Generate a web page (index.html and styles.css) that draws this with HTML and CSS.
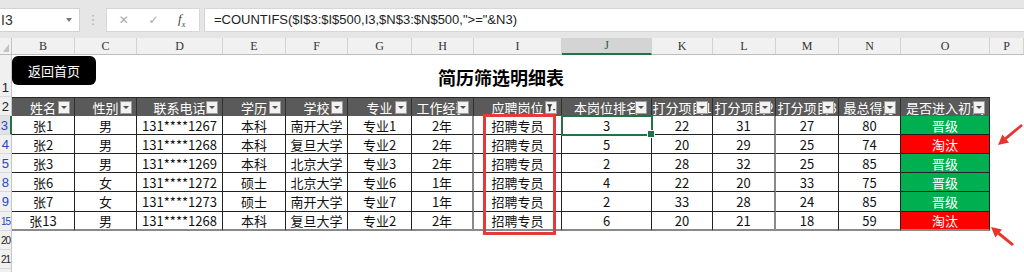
FILE: index.html
```html
<!DOCTYPE html>
<html lang="zh-CN">
<head>
<meta charset="utf-8">
<title>简历筛选明细表</title>
<link rel="stylesheet" href="styles.css">
</head>
<body>
<div class="app">
  <div class="fbar">
    <div class="namebox"><span class="nb-text">I3</span><span class="nb-arrow"></span></div>
    <div class="dots">⋮</div>
    <div class="fxbox"><span class="ic">✕</span><span class="ic">✓</span><span class="ic fx">f<sub>x</sub></span></div>
    <div class="formula">=COUNTIFS($I$3:$I$500,I3,$N$3:$N$500,"&gt;="&amp;N3)</div>
  </div>

  <div class="sheet">
    <div class="row colhdr">
      <div class="corner"></div>
      <div>B</div><div>C</div><div>D</div><div>E</div><div>F</div><div>G</div><div>H</div><div>I</div>
      <div class="csel">J</div><div>K</div><div>L</div><div>M</div><div>N</div><div>O</div><div>P</div>
    </div>

    <div class="row r1">
      <div class="rh bottom">1</div>
      <div class="title">简历筛选明细表</div>
      <div></div>
    </div>

    <div class="row r2">
      <div class="rh">2</div>
      <div class="th">姓名<span class="dd"></span></div>
      <div class="th">性别<span class="dd"></span></div>
      <div class="th">联系电话<span class="dd"></span></div>
      <div class="th">学历<span class="dd"></span></div>
      <div class="th">学校<span class="dd"></span></div>
      <div class="th">专业<span class="dd"></span></div>
      <div class="th">工作经验<span class="dd"></span></div>
      <div class="th">应聘岗位<span class="dd filt"><svg viewBox="0 0 11 12" width="11" height="12"><path d="M1 2h6L5 5v4L3 10V5z" fill="#333"/><path d="M7.5 7h3l-1.5 2z" fill="#333"/></svg></span></div>
      <div class="th">本岗位排名<span class="dd"></span></div>
      <div class="th">打分项目1<span class="dd"></span></div>
      <div class="th">打分项目2<span class="dd"></span></div>
      <div class="th">打分项目3<span class="dd"></span></div>
      <div class="th">最总得分<span class="dd"></span></div>
      <div class="th">是否进入初试<span class="dd"></span></div>
      <div class="blank"></div>
    </div>

    <div class="row rd">
      <div class="rh f sel">3</div>
      <div class="td">张1</div><div class="td">男</div><div class="td">131****1267</div><div class="td">本科</div><div class="td">南开大学</div><div class="td">专业1</div><div class="td gr">2年</div><div class="td">招聘专员</div><div class="td">3</div><div class="td">22</div><div class="td gr">31</div><div class="td">27</div><div class="td">80</div><div class="td ok">晋级</div><div class="blank"></div>
    </div>
    <div class="row rd">
      <div class="rh f">4</div>
      <div class="td">张2</div><div class="td">男</div><div class="td">131****1268</div><div class="td">本科</div><div class="td">复旦大学</div><div class="td">专业2</div><div class="td gr">2年</div><div class="td">招聘专员</div><div class="td">5</div><div class="td">20</div><div class="td gr">29</div><div class="td">25</div><div class="td">74</div><div class="td no">淘汰</div><div class="blank"></div>
    </div>
    <div class="row rd">
      <div class="rh f">5</div>
      <div class="td">张3</div><div class="td">男</div><div class="td">131****1269</div><div class="td">本科</div><div class="td">北京大学</div><div class="td">专业3</div><div class="td gr">2年</div><div class="td">招聘专员</div><div class="td">2</div><div class="td">28</div><div class="td gr">32</div><div class="td">25</div><div class="td">85</div><div class="td ok">晋级</div><div class="blank"></div>
    </div>
    <div class="row rd">
      <div class="rh f">8</div>
      <div class="td">张6</div><div class="td">女</div><div class="td">131****1272</div><div class="td">硕士</div><div class="td">北京大学</div><div class="td">专业6</div><div class="td gr">1年</div><div class="td">招聘专员</div><div class="td">4</div><div class="td">22</div><div class="td gr">20</div><div class="td">33</div><div class="td">75</div><div class="td ok">晋级</div><div class="blank"></div>
    </div>
    <div class="row rd tall">
      <div class="rh f">9</div>
      <div class="td">张7</div><div class="td">女</div><div class="td">131****1273</div><div class="td">硕士</div><div class="td">南开大学</div><div class="td">专业7</div><div class="td gr">1年</div><div class="td">招聘专员</div><div class="td">2</div><div class="td">33</div><div class="td gr">28</div><div class="td">24</div><div class="td">85</div><div class="td ok">晋级</div><div class="blank"></div>
    </div>
    <div class="row rd last">
      <div class="rh f two">15</div>
      <div class="td">张13</div><div class="td">男</div><div class="td">131****1268</div><div class="td">本科</div><div class="td">复旦大学</div><div class="td">专业2</div><div class="td gr">2年</div><div class="td">招聘专员</div><div class="td">6</div><div class="td">20</div><div class="td gr">21</div><div class="td">18</div><div class="td">59</div><div class="td no">淘汰</div><div class="blank"></div>
    </div>
    <div class="row re">
      <div class="rh two">20</div><div class="wide"></div>
    </div>
    <div class="row re">
      <div class="rh two">21</div><div class="wide"></div>
    </div>
    <div class="row re">
      <div class="rh"></div><div class="wide"></div>
    </div>
  </div>

  <div class="back">返回首页</div>
  <div class="redbox"></div>
  <div class="selbox"></div>
  <svg class="arrows" width="1024" height="272" viewBox="0 0 1024 272">
    <polygon points="1022.8,126 1021.2,124 1004.6,137.6 1006.4,139.8" fill="#e8342c"/>
    <polygon points="998,145 1009,142.6 1002.4,134.6" fill="#e8342c"/>
    <polygon points="1014,244 1012,246 997.6,234.4 999.4,232" fill="#e8342c"/>
    <polygon points="991,227 1002,229.4 995.4,237.4" fill="#e8342c"/>
  </svg>
</div>
</body>
</html>
```

FILE: styles.css
```css
* { box-sizing: border-box; }
body {
  margin: 0;
  background: #ffffff;
  font-family: "Noto Sans CJK SC", "Noto Sans", sans-serif;
}
.app {
  position: relative;
  width: 1024px;
  height: 272px;
  overflow: hidden;
}

/* formula bar */
.fbar {
  height: 38px;
  background: #e6e6e6;
  display: flex;
  align-items: flex-start;
  padding-top: 8px;
}
.namebox {
  width: 80px;
  height: 24px;
  background: #ffffff;
  border: 1px solid #d2d2d2;
  border-left: none;
  display: flex;
  align-items: center;
  justify-content: space-between;
  padding: 0 7px 0 0;
}
.nb-text {
  font-family: "Liberation Sans", sans-serif;
  font-size: 14px;
  color: #333;
  margin-left: 1px;
}
.nb-arrow {
  width: 0;
  height: 0;
  border-left: 3px solid transparent;
  border-right: 3px solid transparent;
  border-top: 4px solid #777;
}
.dots {
  width: 26px;
  height: 24px;
  line-height: 24px;
  text-align: center;
  color: #b0b0b0;
  font-size: 13px;
  font-family: "DejaVu Sans", sans-serif;
}
.fxbox {
  width: 94px;
  height: 24px;
  background: #ffffff;
  border: 1px solid #d6d6d6;
  display: flex;
  align-items: center;
  justify-content: space-around;
  padding: 0 4px 0 2px;
}
.ic {
  font-family: "DejaVu Sans", sans-serif;
  font-size: 12px;
  color: #a8a8a8;
}
.fx {
  font-family: "Liberation Serif", serif;
  font-style: italic;
  font-size: 13px;
  color: #444;
}
.fx sub { font-size: 8px; }
.formula {
  flex: 1;
  height: 24px;
  margin-left: 4px;
  background: #ffffff;
  border: 1px solid #d6d6d6;
  border-right: none;
  padding-left: 9px;
  line-height: 22px;
  font-family: "Liberation Sans", sans-serif;
  font-size: 13px;
  color: #222;
  white-space: nowrap;
}

/* sheet grid */
.row {
  display: grid;
  grid-template-columns: 12px 63px 62px 86px 63px 62px 64px 62px 88px 90px 61px 63px 63px 62px 89px 34px;
}
.colhdr { height: 17px; }
.colhdr > div {
  background: #f1f1f1;
  border-right: 1px solid #d2d2d2;
  border-bottom: 1px solid #bdbdbd;
  display: flex;
  align-items: center;
  justify-content: center;
  font-family: "Liberation Serif", serif;
  font-size: 12px;
  color: #333;
}
.colhdr > .corner {
  position: relative;
  border-right: 1px solid #c4c4c4;
}
.corner::after {
  content: "";
  position: absolute;
  right: 2px;
  bottom: 2px;
  width: 0;
  height: 0;
  border-left: 6px solid transparent;
  border-bottom: 8px solid #c2c2c2;
}
.colhdr > .csel {
  background: #d4d4d4;
  border-bottom: 2px solid #217346;
  color: #1f5e38;
}

.rh {
  background: #f0f0f0;
  border-right: 1px solid #c6c6c6;
  border-bottom: 1px solid #dadada;
  display: flex;
  justify-content: flex-end;
  align-items: center;
  overflow: hidden;
  padding-right: 2px;
  font-family: "Liberation Sans", sans-serif;
  font-size: 13px;
  color: #222;
  white-space: nowrap;
}
.rh.two {
  font-size: 10px;
  letter-spacing: -1px;
  padding-right: 1px;
}
.rh.bottom { align-items: flex-end; padding-bottom: 1px; }
.rh.f { color: #2546c9; }
.rh.sel {
  background: #e2e2e2;
  border-right: 2px solid #217346;
}

.r1 { height: 42px; }
.title {
  grid-column: 2 / 16;
  display: flex;
  align-items: center;
  justify-content: center;
  font-size: 18px;
  font-weight: 700;
  color: #000;
  padding-top: 1px;
}

.r2 { height: 19px; }
.th {
  position: relative;
  background: #5a5a5a;
  color: #ffffff;
  font-size: 13px;
  border-right: 1px solid #303030;
  border-top: 1px solid #2a2a2a;
  display: flex;
  align-items: center;
  justify-content: center;
  overflow: hidden;
  white-space: nowrap;
  line-height: 1;
}
.dd {
  position: absolute;
  right: 4px;
  top: 3px;
  width: 12px;
  height: 13px;
  background: #f2f2f2;
  border: 1px solid #9c9c9c;
  display: flex;
  align-items: center;
  justify-content: center;
}
.dd::after {
  content: "";
  width: 0;
  height: 0;
  border-left: 3px solid transparent;
  border-right: 3px solid transparent;
  border-top: 3px solid #505050;
}
.dd.filt::after { display: none; }
.dd.filt svg { display: block; }

.rd { height: 19px; }
.rd.tall { height: 20px; }
.td {
  border-right: 1px solid #222;
  border-bottom: 1px solid #222;
  display: flex;
  align-items: center;
  justify-content: center;
  font-size: 13px;
  color: #111;
  white-space: nowrap;
  line-height: 1;
}
.td.gr { border-right: 2px solid #8a8a8a; }
.rd.last .td { border-bottom: 2px solid #8a8a8a; }
.td.ok { background: #00b050; color: #ffffff; }
.td.no { background: #ff0000; color: #ffffff; }
.blank { background: #ffffff; }

.re { height: 19px; }
.wide { grid-column: 2 / 17; }

/* floating shapes / annotations */
.back {
  position: absolute;
  left: 12px;
  top: 56px;
  width: 84px;
  height: 29px;
  background: #000000;
  border-radius: 6px;
  color: #ffffff;
  font-size: 13px;
  display: flex;
  align-items: center;
  justify-content: center;
}
.redbox {
  position: absolute;
  left: 483px;
  top: 114px;
  width: 73px;
  height: 121px;
  border: 3px solid #e23b3b;
}
.selbox {
  position: absolute;
  left: 561px;
  top: 115px;
  width: 92px;
  height: 21px;
  border: 2px solid #217346;
}
.selbox::after {
  content: "";
  position: absolute;
  right: -4px;
  bottom: -4px;
  width: 6px;
  height: 6px;
  background: #217346;
  border: 1px solid #ffffff;
}
.arrows {
  position: absolute;
  left: 0;
  top: 0;
  pointer-events: none;
}
```
